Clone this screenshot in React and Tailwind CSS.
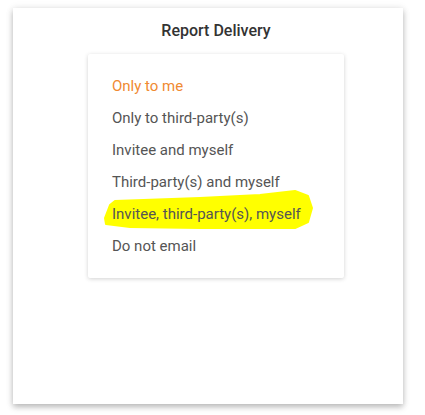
export default function App() {
  const items = [
    "Only to me",
    "Only to third-party(s)",
    "Invitee and myself",
    "Third-party(s) and myself",
    "Invitee, third-party(s), myself",
    "Do not email",
  ];
  return (
    <div className="w-[425px] h-[415px] bg-white font-['Roboto',sans-serif] pt-[8px] pl-[13px]">
      <div className="w-[390px] h-[396px] bg-white shadow-[0_3px_6px_rgba(0,0,0,0.25),0_0_8px_rgba(0,0,0,0.08)] flex flex-col items-center pt-[13px] pl-4">
        <div className="h-[20px] leading-[20px] text-[16px] font-medium text-[#333]">Report Delivery</div>
        <div className="relative mt-[13px] w-[256px] h-[224px] bg-white rounded-[2px] shadow-[0_1px_4px_rgba(0,0,0,0.18)] pt-4 pl-6">
          <svg className="absolute left-0 top-0" width="256" height="224" viewBox="0 0 256 224">
            <path
              d="M27 147 L112 144 L172 141 L207 137 L220 142 L224 154 L220 168 L207 174 L112 174 L42 173 L18 170 L17 164 L22 151 Z"
              fill="#ffff00"
              stroke="#ffff00"
              strokeWidth="2"
              strokeLinejoin="round"
            />
          </svg>
          {items.map((t, i) => (
            <div
              key={t}
              className={`relative h-8 leading-8 text-[15px] ${i === 0 ? "text-[#f08a32]" : "text-[#555555]"}`}
            >
              {t}
            </div>
          ))}
        </div>
      </div>
    </div>
  );
}
